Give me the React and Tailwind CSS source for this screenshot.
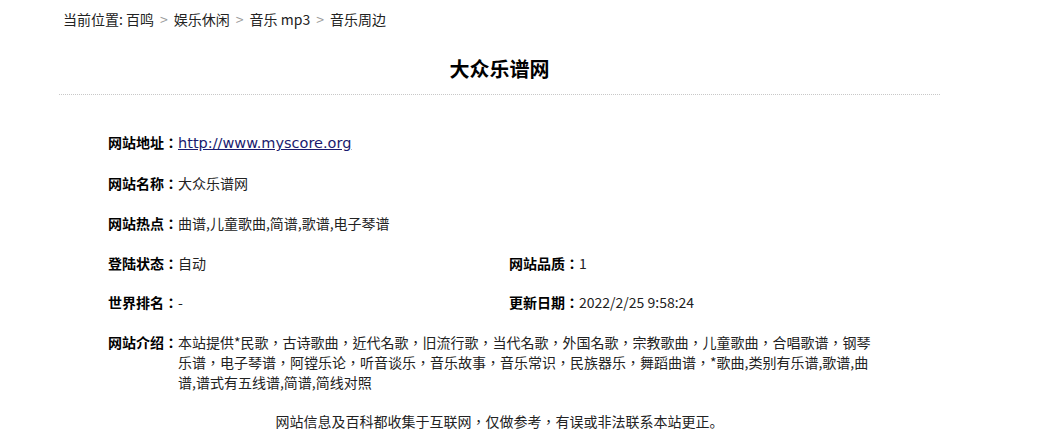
import React from 'react';

const cjk = { fontFamily: '"Noto Sans CJK SC", "Noto Sans", sans-serif' };
const tc = { fontFamily: '"Noto Sans CJK TC", "Noto Sans CJK SC", sans-serif' };

// full-width commas and colons sit centred in the reference, as in the TC cut
const punct = (text) =>
  text.split('，').map((part, i) => (
    <React.Fragment key={i}>
      {i > 0 && <span style={tc}>，</span>}
      {part}
    </React.Fragment>
  ));

const Field = ({ label, children }) => (
  <div className="flex">
    <span className="font-bold text-black whitespace-nowrap">
      {label}
      <span style={tc}>：</span>
    </span>
    <span className="flex-1">{children}</span>
  </div>
);

const App = () => {
  const crumbs = ['百鸣', '娱乐休闲', '音乐 mp3', '音乐周边'];

  return (
    <div className="min-h-screen bg-white" style={cjk}>
      <div className="ml-[59px] w-[881px] text-[14px] leading-[20px] text-[#222]">
        {/* breadcrumb */}
        <div className="pt-[9px] pl-[4px]">
          当前位置:{' '}
          {crumbs.map((c, i) => (
            <span key={c}>
              {i > 0 && <span className="mx-[6px] text-[#999]">&gt;</span>}
              {c}
            </span>
          ))}
        </div>

        <h1 className="mt-[26px] pb-[11px] text-center text-[20px] leading-[28px] font-bold text-black border-b border-dotted border-[#c8c8c8]">
          大众乐谱网
        </h1>

        <div className="pt-[27px] pl-[49px] w-[825px]">
          <div className="py-[10px]">
            <Field label="网站地址">
              <a
                href="#"
                className="underline text-[#1a1a6e] text-[14.5px]"
                style={{ fontFamily: '"DejaVu Sans", Verdana, sans-serif' }}
              >
                http://www.myscore.org
              </a>
            </Field>
          </div>
          <div className="py-[10px]">
            <Field label="网站名称">大众乐谱网</Field>
          </div>
          <div className="py-[10px]">
            <Field label="网站热点">曲谱,儿童歌曲,简谱,歌谱,电子琴谱</Field>
          </div>
          <div className="pt-[10px] pb-[9px] grid grid-cols-[401px_1fr]">
            <Field label="登陆状态">自动</Field>
            <Field label="网站品质">1</Field>
          </div>
          <div className="py-[10px] grid grid-cols-[401px_1fr]">
            <Field label="世界排名">-</Field>
            <Field label="更新日期">2022/2/25 9:58:24</Field>
          </div>
          <div className="py-[10px] w-[776px]">
            <Field label="网站介绍">
              <span style={tc}>
                本站提供*民歌，古诗歌曲，近代名歌，旧流行歌，当代名歌，外国名歌，宗教歌曲，儿童歌曲，合唱歌谱，钢琴乐谱，电子琴谱，阿镗乐论，听音谈乐，音乐故事，音乐常识，民族器乐，舞蹈曲谱，*歌曲,类别有乐谱,歌谱,曲谱,谱式有五线谱,简谱,简线对照
              </span>
            </Field>
          </div>
        </div>

        <div className="mt-[9px] text-center">
          {punct('网站信息及百科都收集于互联网，仅做参考，有误或非法联系本站更正。')}
        </div>
      </div>
    </div>
  );
};

export default App;
